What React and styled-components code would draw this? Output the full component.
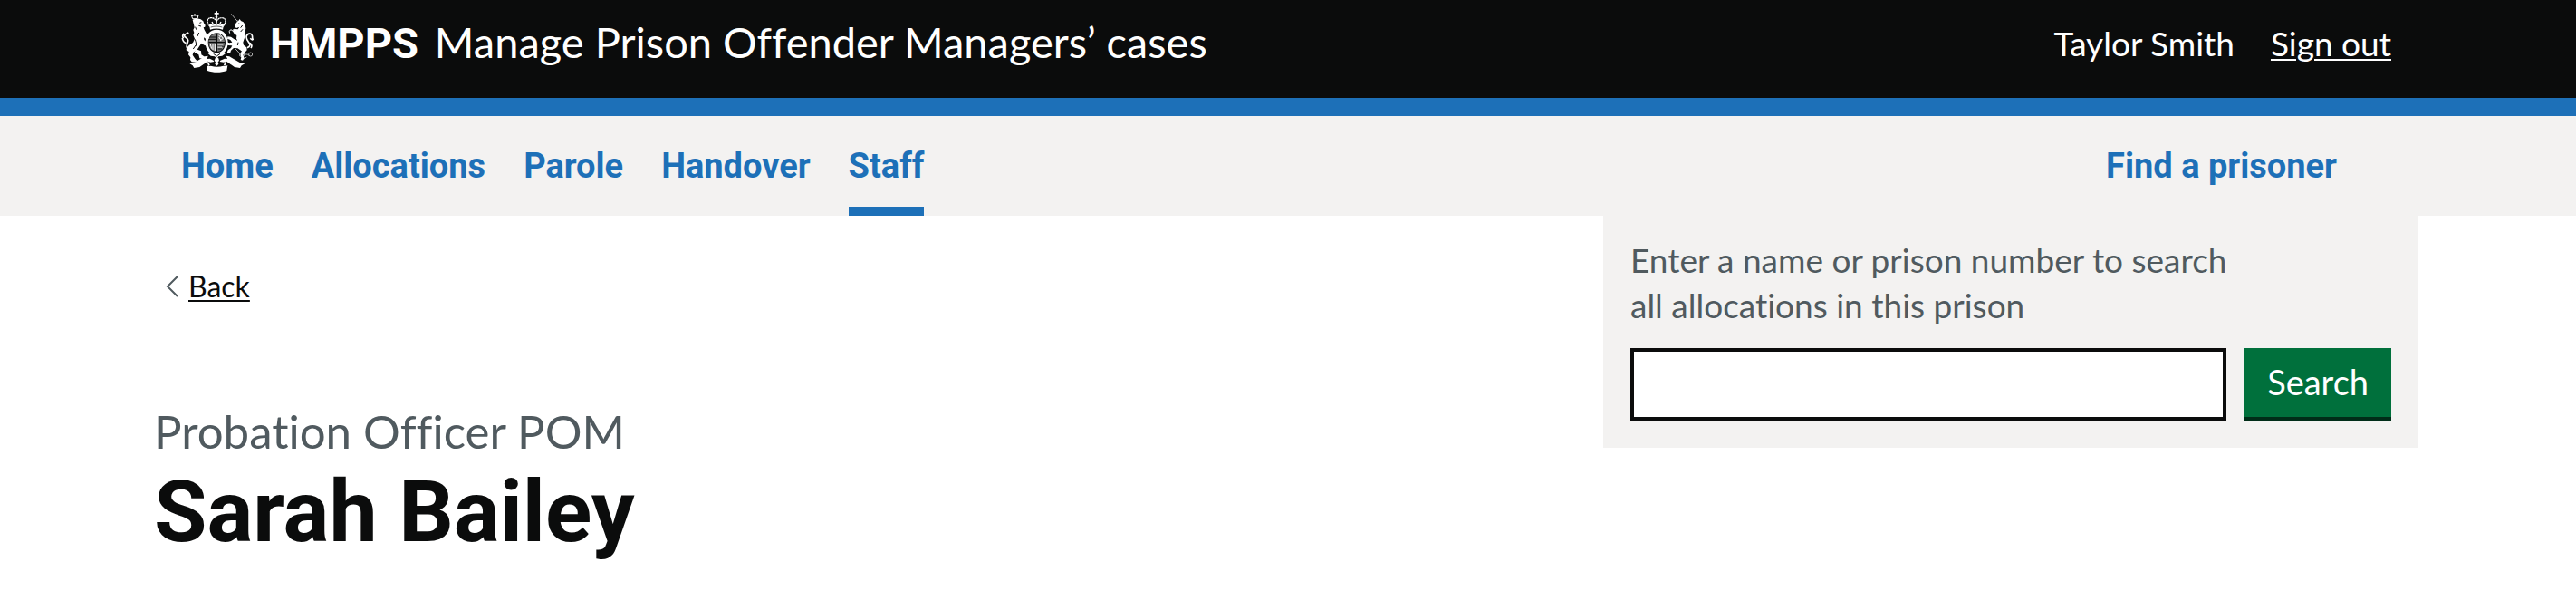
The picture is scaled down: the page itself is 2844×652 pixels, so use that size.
import React from "react";
import styled, { createGlobalStyle } from "styled-components";

const black = "#0b0c0c";
const blue = "#1d70b8";
const grey = "#f3f2f1";
const secondary = "#505a5f";
const boldFamily = `Roboto, "Liberation Sans", sans-serif`;

const GlobalStyle = createGlobalStyle`
  * { box-sizing: border-box; }
  body {
    margin: 0;
    background: #fff;
    color: ${black};
    font-family: Lato, "Liberation Sans", sans-serif;
    font-variant-ligatures: none;
  }
`;

const Header = styled.header`
  background: ${black};
  color: #fff;
  border-bottom: 20px solid ${blue};
  padding: 0 204px 16px 200px;
`;

const HeaderRow = styled.div`
  display: flex;
  align-items: center;
  justify-content: space-between;
  min-height: 92px;
`;

const Brand = styled.a`
  display: flex;
  align-items: center;
  gap: 18px;
  color: inherit;
  text-decoration: none;
`;

const Crest = styled.svg`
  width: 80px;
  height: 72px;
`;

const BrandText = styled.span`
  display: flex;
  align-items: baseline;
  gap: 18px;
`;

const Organisation = styled.strong`
  font-family: ${boldFamily};
  font-size: 47px;
  font-weight: 700;
  line-height: 47px;
`;

const ServiceName = styled.span`
  font-size: 47px;
  line-height: 60px;
`;

const Account = styled.div`
  display: flex;
  gap: 40px;
  padding-top: 4px;
  font-size: 37px;
  line-height: 50px;
`;

const TextLink = styled.a`
  color: inherit;
  text-decoration: underline;
  text-decoration-thickness: 2px;
  text-underline-offset: 3px;
`;

const Nav = styled.nav`
  display: flex;
  justify-content: space-between;
  background: ${grey};
  padding: 0 264px 0 200px;
`;

const NavList = styled.ul`
  display: flex;
  gap: 42px;
  margin: 0;
  padding: 0;
  list-style: none;
`;

const NavLink = styled.a`
  display: block;
  padding: 30px 0 20px;
  border-bottom: 10px solid ${(p) => (p.$current ? blue : "transparent")};
  color: ${blue};
  font-family: ${boldFamily};
  font-size: 38px;
  font-weight: 700;
  line-height: 50px;
  text-decoration: none;
`;

const Page = styled.div`
  display: flex;
  align-items: flex-start;
  justify-content: space-between;
  padding: 0 174px 0 170px;
`;

const Main = styled.main`
  padding-top: 58px;
`;

const BackRow = styled.div`
  display: flex;
  align-items: center;
  gap: 10px;
  padding-left: 12px;
  margin-bottom: 110px;
  font-size: 32px;
  line-height: 40px;
`;

const Chevron = styled.svg`
  width: 16px;
  height: 24px;
`;

const Caption = styled.p`
  margin: 0 0 4px;
  color: ${secondary};
  font-size: 51px;
  line-height: 60px;
`;

const Title = styled.h1`
  margin: 0;
  font-family: ${boldFamily};
  font-size: 95px;
  font-weight: 700;
  line-height: 110px;
`;

const SearchPanel = styled.form`
  flex: 0 1 900px;
  padding: 24px 30px 30px;
  background: ${grey};
`;

const SearchLabel = styled.label`
  display: block;
  margin-bottom: 22px;
  color: ${secondary};
  font-size: 37px;
  line-height: 50px;
`;

const SearchRow = styled.div`
  display: flex;
  gap: 20px;
`;

const SearchInput = styled.input`
  flex: 1;
  min-width: 0;
  height: 80px;
  padding: 10px;
  border: 4px solid ${black};
  border-radius: 0;
  background: #fff;
  font: inherit;
  font-size: 37px;
`;

const SearchButton = styled.button`
  height: 80px;
  padding: 0 25px 6px;
  border: 0;
  border-radius: 0;
  background: #00703c;
  box-shadow: inset 0 -4px 0 #002d18;
  color: #fff;
  font: inherit;
  font-size: 38px;
  line-height: 50px;
`;

function RoyalCrest() {
  return (
    <Crest viewBox="30 30 240 216" fill="#fff" role="img" aria-label="Royal coat of arms">
      {/* crown */}
      <path d="M145 37h5v5h5v5h-5v6h-5v-6h-5v-5h5z" />
      <circle cx="147" cy="56" r="4" />
      <path
        d="M126 88c-14-14-10-30 4-29 8 0 14 5 17 12 3-7 9-12 17-12 14-1 18 15 4 29"
        fill="none" stroke="#fff" strokeWidth="4" strokeDasharray="6 1"
      />
      <path d="M147 58v24M132 72l5 10M162 72l-5 10" stroke="#fff" strokeWidth="4" />
      <path d="M123 82l6-5 6 6 6-5 6 5 6-5 6 5 6-6 6 5-3 16c-14-5-28-5-42 0z" />
      <path d="M128 90c13-4 25-4 38 0" fill="none" stroke={black} strokeWidth="2" />
      {/* garter and shield */}
      <path fillRule="evenodd" d="M148 98c22 0 37 18 37 42s-15 45-37 45-38-21-38-45 16-42 38-42zm0 11c-16 0-29 14-29 32s12 34 29 34 29-16 29-34-13-32-29-32z" />
      <path d="M148 111c15 0 26 12 26 29s-10 31-26 31-27-14-27-31 12-29 27-29z" fill="#777" />
      <path d="M148 111v60M121 140h53" stroke={black} strokeWidth="4" />
      <path d="M125 123h20M122 130h23M152 146h20M152 154h18M152 162h13" stroke={black} strokeWidth="3" />
      <path d="M154 117l6 4-5 5 8 6M160 115l9 12-10 8M127 147l4 14M135 145v20M142 146v22" stroke="#fff" strokeWidth="3" fill="none" />
      <path d="M151 147h18M151 156h15" stroke="#fff" strokeWidth="3" />
      {/* lion */}
      <path d="M64 50l4 4 3-6 4 5 4-5 3 6 5-4-3 12H68z" fill="none" stroke="#fff" strokeWidth="3" />
      <circle cx="75" cy="47" r="2" />
      <path d="M68 66c5-4 18-6 27-2l8 6 3 8 4 5-1 6-5 2 3 8 8 14 8 8-1 7-9 2-8-6 1 8 9 8 3 8-3 4-9-3-9-6-6 9-9 14-12 8-2 8 8 12 6 7-3 5-14-1-5-7 1-8-7-9 2-10-9-5 1-8 9-9 12-8 6-13-5-12 3-8-3-9 4-8-2-9z" />
      <path d="M80 163l16 6 1 12 12 8-3 5-15-1-3-12-14-8z" />
      <path d="M91 76l6-2M88 85l8 2M76 130c2 8 5 14 3 22M89 108l-5 12M70 162l8-12M77 89l3 9" stroke={black} strokeWidth="3" fill="none" />
      <path d="M49 158c-3-12 5-15 4-25-2-10-13-7-12-16 1-6 9-6 14-9M38 127c-4-6-5-11 2-16M47 143c-8-2-12-9-13-17" fill="none" stroke="#fff" strokeWidth="5" />
      {/* unicorn */}
      <path d="M196 46l21 25" stroke="#fff" strokeWidth="2" />
      <path d="M213 68l5 3 6-8 4 6 8 4 6 9 2 12-3 14 3 10-5 10-4 12 2 9 10 8 1 9-7 8-6 8 4 10-5 8-7-2 2-8-3-10 4-11-13-9-13-1-9 8-3 10-10-2 3-9 10-7 4-8-13-1-10-5 3-6 11 3 9-2-6-8-10-4 1-7 11 1 11 8 7-1 1-12-9-7-5-9 9-5 9 1 5-8-10 4-6-5 5-12 7-8z" />
      <path d="M191 110l-2-7 6-5 7 5M202 98l8-2" fill="none" stroke="#fff" strokeWidth="3" />
      <path d="M219 78l5 1M233 84l-6 8M234 97l-7 8M208 128l8 5M219 140l-2 10M222 167l8 4" stroke={black} strokeWidth="3" fill="none" />
      <path d="M249 158c10-3 11-11 5-18-7-9-12-17-5-25 5-5 14-5 16 2 2 5-1 9 3 14M259 127c5 6 9 6 9 1M258 142c7 5 7 12 3 17" fill="none" stroke="#fff" strokeWidth="5" />
      {/* chain */}
      <g fill="none" stroke="#fff" strokeWidth="2">
        <path d="M224 177l7-4 7 4v8l-7 4-7-4zM238 180h13l4 5" />
        <circle cx="260" cy="180" r="6" />
        <path d="M208 160l8 8 6 7M232 189l7 5 8-5" />
      </g>
      {/* pendant and motto scroll */}
      <path d="M118 176l15-4 15 7 16-7 14 4-12 9-12 2-6 7-7-7-13-2z" />
      <path d="M137 178l11 8 11-8" fill="none" stroke={black} strokeWidth="3" />
      <path d="M143 193l5-4 6 4 2 8-4 4 2 7-6 6-6-6 2-7-4-4z" />
      <path d="M58 210l14-1 16-10 20-12 11-2-3 10 9-1 12 6 2 4-12 2-9-3-27 19-18 3-5-8z" />
      <path d="M242 210l-14-1-18-10-20-12-11-2 4 10-9-1-14 6-2 4 13 2 9-3 27 19 18 3 5-8z" />
      <path d="M118 205l5 12M178 205l-5 12" stroke="#fff" strokeWidth="5" />
      <path d="M114 216c4 3 10 4 14 2 14 4 28 4 42 0 5 2 10 1 14-2l-3 18c-18 7-46 7-64 0z" />
    </Crest>
  );
}

const sections = ["Home", "Allocations", "Parole", "Handover", "Staff"];

export default function App() {
  return (
    <>
      <GlobalStyle />
      <Header>
        <HeaderRow>
          <Brand href="#home">
            <RoyalCrest />
            <BrandText>
              <Organisation>HMPPS</Organisation>
              <ServiceName>Manage Prison Offender Managers’ cases</ServiceName>
            </BrandText>
          </Brand>
          <Account>
            <span>Taylor Smith</span>
            <TextLink href="#sign-out">Sign out</TextLink>
          </Account>
        </HeaderRow>
      </Header>
      <Nav aria-label="Primary">
        <NavList>
          {sections.map((name) => (
            <li key={name}>
              <NavLink
                href={`#${name.toLowerCase()}`}
                $current={name === "Staff"}
                aria-current={name === "Staff" ? "page" : undefined}
              >
                {name}
              </NavLink>
            </li>
          ))}
        </NavList>
        <NavLink href="#search">Find a prisoner</NavLink>
      </Nav>
      <Page>
        <Main>
          <BackRow>
            <Chevron viewBox="0 0 16 24" aria-hidden="true">
              <path d="M14 1L3 12l11 11" fill="none" stroke={secondary} strokeWidth="2" />
            </Chevron>
            <TextLink href="#staff">Back</TextLink>
          </BackRow>
          <Caption>Probation Officer POM</Caption>
          <Title>Sarah Bailey</Title>
        </Main>
        <SearchPanel id="search" role="search" onSubmit={(e) => e.preventDefault()}>
          <SearchLabel htmlFor="q">
            Enter a name or prison number to search
            <br />
            all allocations in this prison
          </SearchLabel>
          <SearchRow>
            <SearchInput id="q" name="q" type="text" />
            <SearchButton type="submit">Search</SearchButton>
          </SearchRow>
        </SearchPanel>
      </Page>
    </>
  );
}
